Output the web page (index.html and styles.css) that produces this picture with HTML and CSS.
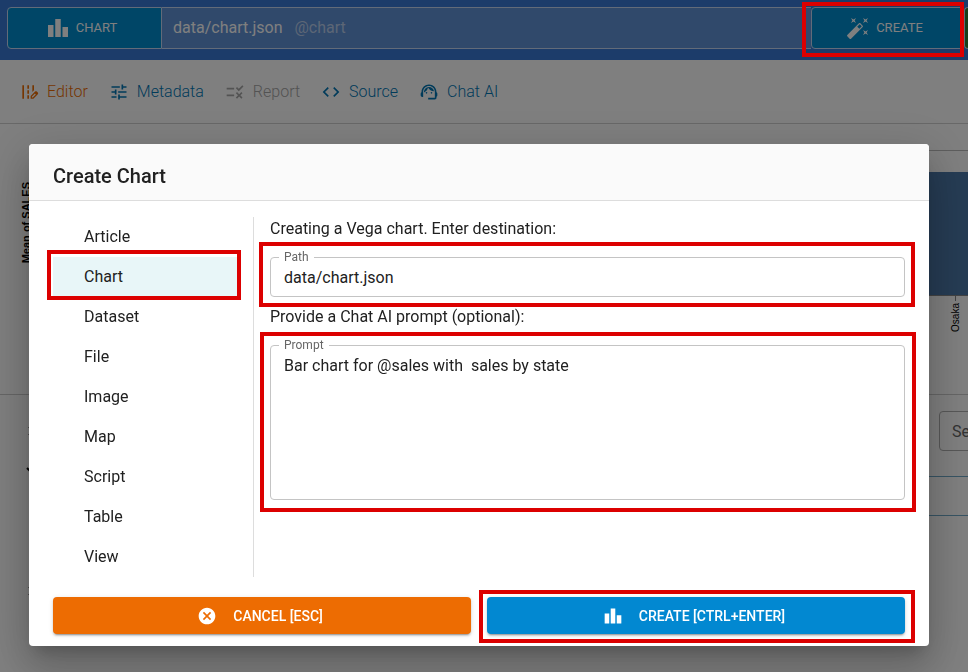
FILE: index.html
```html
<!DOCTYPE html>
<html lang="en">
<head>
<meta charset="utf-8">
<title>Create Chart</title>
<link rel="stylesheet" href="styles.css">
</head>
<body>
<div class="page">
  <header class="topbar">
    <button class="bar-btn bar-kind" type="button">
      <svg class="icon-lg" viewBox="0 0 24 24"><path d="M7.5 21H2V9h5.5v12zm7.25-18h-5.5v18h5.5V3zM22 11h-5.5v10H22V11z"/></svg>
      CHART
    </button>
    <div class="bar-path"><span>data/chart.json</span><span class="bar-ref">@chart</span></div>
    <button class="bar-btn bar-create" type="button">
      <svg class="icon-lg" viewBox="0 0 24 24"><path d="M7.5 5.6L5 7l1.4-2.5L5 2l2.5 1.4L10 2 8.6 4.5 10 7 7.5 5.6zm12 9.8L22 14l-1.4 2.5L22 19l-2.500-1.400L17 19l1.400-2.500L17 14l2.500 1.400zM22 2l-1.400 2.500L22 7l-2.500-1.400L17 7l1.400-2.500L17 2l2.500 1.400L22 2zm-8.660 10.780l2.440-2.440-2.120-2.120-2.440 2.440 2.120 2.120zm1.030-5.490l2.340 2.340c.39.37.39 1.020 0 1.410L5.040 22.710c-.39.39-1.040.39-1.410 0l-2.340-2.340c-.39-.37-.39-1.020 0-1.410L12.960 7.290c.39-.39 1.040-.39 1.410 0z"/></svg>
      CREATE
    </button>
    <div class="bar-run"></div>
  </header>
  <nav class="tabs">
    <a class="tab tab-active" href="#editor">
      <svg class="icon" viewBox="0 0 24 24"><path d="M18 4h-2v7.900l2-2zM4 4h2v16H4zM10 4h2v4h-2zM10 10h2v4h-2zM10 16h2v4h-2z"/><path fill-rule="evenodd" d="M22.560 12.590l-1.150-1.150c-.59-.59-1.540-.59-2.120 0L14 16.730V20h3.270l5.290-5.290c.59-.58.59-1.530 0-2.120zm-5.980 5.910h-1.080v-1.080l3.590-3.590 1.080 1.080z"/></svg>Editor</a>
    <a class="tab" href="#metadata">
      <svg class="icon" viewBox="0 0 24 24"><path d="M3 17v2h6v-2H3zM3 5v2h10V5H3zm10 16v-2h8v-2h-8v-2h-2v6h2zM7 9v2H3v2h4v2h2V9H7zm14 4v-2H11v2h10zm-6-4h2V7h4V5h-4V3h-2v6z"/></svg>Metadata</a>
    <a class="tab tab-disabled" href="#report">
      <svg class="icon" viewBox="0 0 24 24"><path d="M16.540 11L13 7.460l1.410-1.410 2.120 2.120 4.240-4.240 1.410 1.410L16.540 11zM11 7H2v2h9V7zm10 6.410L19.590 12 17 14.590 14.410 12 13 13.410 15.590 16 13 18.590 14.410 20 17 17.410 19.590 20 21 18.590 18.410 16 21 13.410zM11 15H2v2h9v-2z"/></svg>Report</a>
    <a class="tab" href="#source">
      <svg class="icon" viewBox="0 0 24 24"><path d="M9.400 16.600L4.800 12l4.600-4.600L8 6l-6 6 6 6 1.400-1.400zm5.200 0l4.600-4.600-4.600-4.600L16 6l6 6-6 6-1.400-1.400z"/></svg>Source</a>
    <a class="tab" href="#chat">
      <svg class="icon" viewBox="0 0 24 24"><path d="M21 12.220C21 6.730 16.740 3 12 3c-4.690 0-9 3.650-9 9.280-.6.34-1 .98-1 1.720v2c0 1.100.9 2 2 2h1v-6.100c0-3.870 3.130-7 7-7s7 3.130 7 7V19h-8v2h8c1.100 0 2-.9 2-2v-1.220c.59-.31 1-.92 1-1.640v-2.300c0-.7-.41-1.310-1-1.620z"/><circle cx="9" cy="13" r="1"/><circle cx="15" cy="13" r="1"/><path d="M18 11.030C17.520 8.180 15.040 6 12.050 6c-3.030 0-6.290 2.510-6.030 6.450 2.470-1.010 4.330-3.210 4.860-5.890 1.310 2.630 4 4.440 7.120 4.470z"/></svg>Chat AI</a>
  </nav>
  <section class="chart">
    <div class="axis-title">Mean of SALES</div>
    <div class="plot">
      <div class="bar"></div>
      <div class="tick"></div>
      <div class="tick-label">Osaka</div>
    </div>
  </section>
  <section class="lower">
    <div class="outline">
      <span class="handle"></span>
      <svg class="chevron" viewBox="0 0 10 8"><path d="M1 2l4 4 4-4"/></svg>
      <span class="handle"></span>
    </div>
    <div class="data">
      <input class="search" type="text" placeholder="Search" aria-label="Search">
      <div class="data-head"></div>
    </div>
  </section>
</div>

<div class="backdrop">
  <span class="mark mark-top"></span>
  <div class="dialog" role="dialog" aria-labelledby="dialog-title">
    <h2 class="dialog-title" id="dialog-title">Create Chart</h2>
    <div class="dialog-body">
      <ul class="kinds">
        <li><button class="kind" type="button">Article</button></li>
        <li class="marked"><button class="kind kind-selected" type="button">Chart</button><span class="mark mark-kind"></span></li>
        <li><button class="kind" type="button">Dataset</button></li>
        <li><button class="kind" type="button">File</button></li>
        <li><button class="kind" type="button">Image</button></li>
        <li><button class="kind" type="button">Map</button></li>
        <li><button class="kind" type="button">Script</button></li>
        <li><button class="kind" type="button">Table</button></li>
        <li><button class="kind" type="button">View</button></li>
      </ul>
      <div class="form">
        <p class="hint">Creating a Vega chart. Enter destination:</p>
        <div class="field marked">
          <label class="field-label" for="path">Path</label>
          <input class="field-input" id="path" type="text" value="data/chart.json">
          <span class="mark mark-path"></span>
        </div>
        <p class="hint">Provide a Chat AI prompt (optional):</p>
        <div class="field marked">
          <label class="field-label" for="prompt">Prompt</label>
          <textarea class="field-input field-area" id="prompt">Bar chart for @sales with  sales by state</textarea>
          <span class="mark mark-prompt"></span>
        </div>
      </div>
    </div>
    <div class="actions">
      <button class="action action-cancel" type="button">
        <svg class="icon" viewBox="0 0 24 24"><path d="M12 2C6.470 2 2 6.470 2 12s4.470 10 10 10 10-4.470 10-10S17.530 2 12 2zm5 13.590L15.590 17 12 13.410 8.410 17 7 15.590 10.590 12 7 8.410 8.410 7 12 10.590 15.590 7 17 8.410 13.410 12 17 15.590z"/></svg>
        CANCEL [ESC]
      </button>
      <div class="marked">
        <button class="action action-create" type="button">
          <svg class="icon" viewBox="0 0 24 24"><path d="M7.500 21H2V9h5.500v12zm7.250-18h-5.500v18h5.500V3zM22 11h-5.500v10H22V11z"/></svg>
          CREATE [CTRL+ENTER]
        </button>
        <span class="mark mark-action"></span>
      </div>
    </div>
  </div>
</div>
</body>
</html>
```

FILE: styles.css
```css
* { box-sizing: border-box; }

body {
  margin: 0;
  font-family: Roboto, "Liberation Sans", sans-serif;
  font-size: 16px;
  line-height: 24px;
  color: #212121;
  background: #fff;
  overflow: hidden;
}

button, input, textarea { font: inherit; color: inherit; }
button { cursor: pointer; }
svg { fill: currentColor; flex: none; }
.icon { width: 20px; height: 20px; }
.icon-lg { width: 24px; height: 24px; }

.page { min-height: 100vh; overflow: hidden; }

/* Top bar */
.topbar {
  display: flex;
  height: 60px;
  padding: 7px 0 11px 7px;
  background: #3878d4;
}
.bar-btn {
  display: flex;
  align-items: center;
  justify-content: center;
  gap: 6px;
  width: 155px;
  padding: 0 10px 0 4px;
  border: 1px solid #c4d7f2;
  background: #008ccf;
  color: #fff;
  font-size: 13px;
}
.bar-kind { border-radius: 4px 0 0 4px; }
.bar-create { border-radius: 4px; width: 153px; }
.bar-path {
  flex: 1;
  display: flex;
  align-items: center;
  gap: 12px;
  padding-left: 11px;
  border: solid #c4d7f2;
  border-width: 1px 0;
  background: #6092d6;
  color: #fff;
}
.bar-ref { color: #b9cdec; }
.bar-run {
  width: 4px;
  border: 1px solid #c4d7f2;
  border-right: 0;
  border-radius: 4px 0 0 4px;
  background: #2e7d32;
}

/* Tabs */
.tabs {
  display: flex;
  align-items: center;
  gap: 21px;
  height: 64px;
  padding-left: 19px;
  border-bottom: 1px solid #d0d0d0;
}
.tab {
  display: flex;
  align-items: center;
  gap: 8px;
  color: #0277b5;
  font-weight: 300;
  text-decoration: none;
}
.tab-active { color: #ed6c02; }
.tab-disabled { color: #a6a6a6; }

/* Chart behind the dialog */
.chart {
  display: flex;
  justify-content: space-between;
  height: 271px;
  border-bottom: 1px solid #ccc;
  font-family: "Liberation Sans", Arial, sans-serif;
}
.axis-title {
  writing-mode: vertical-rl;
  transform: rotate(180deg);
  align-self: flex-start;
  margin: 58px 0 0 20px;
  font-size: 11px;
  line-height: 13px;
  font-weight: 700;
  color: #000;
}
.plot {
  display: flex;
  flex-direction: column;
  align-items: flex-end;
  width: 120px;
  margin-top: 26px;
  border-top: 1px solid #bbb;
}
.bar {
  width: 100%;
  height: 124px;
  margin-top: 21px;
  background: #4c78a8;
  border-bottom: 1px solid #888;
}
.tick { width: 1px; height: 5px; margin-right: 12px; background: #888; }
.tick-label {
  writing-mode: vertical-rl;
  transform: rotate(180deg);
  margin: 2px 6px 0 0;
  font-size: 10px;
  line-height: 12px;
  color: #000;
}

.lower { display: flex; justify-content: space-between; }
.outline { display: flex; flex-direction: column; padding: 32px 0 0 26px; }
.handle {
  width: 12px;
  height: 8px;
  margin-left: 2px;
  border: solid #999;
  border-width: 1px 0;
}
.chevron {
  width: 10px;
  height: 8px;
  margin: 31px 0 113px;
  fill: none;
  stroke: #000;
  stroke-width: 2;
}
.data { width: 120px; padding-top: 16px; }
.search {
  display: block;
  width: 180px;
  height: 40px;
  margin-left: 91px;
  padding: 0 12px;
  border: 1px solid #b0b0b0;
  border-radius: 4px;
  background: transparent;
}
.search::placeholder { color: #666; opacity: 1; }
.data-head {
  height: 40px;
  margin-top: 25px;
  border: solid #6fa9c8;
  border-width: 1px 0;
}

/* Dialog */
.backdrop {
  position: fixed;
  inset: 0;
  display: flex;
  justify-content: center;
  align-items: flex-start;
  padding: 144px 39px 26px 29px;
  background: rgba(0, 0, 0, 0.5);
}
.dialog {
  flex: 1;
  max-width: 900px;
  border-radius: 4px;
  background: #fff;
  box-shadow: 0 11px 15px -7px rgba(0, 0, 0, 0.2),
    0 24px 38px 3px rgba(0, 0, 0, 0.14),
    0 9px 46px 8px rgba(0, 0, 0, 0.12);
}
.dialog-title {
  margin: 0;
  padding: 20px 24px 12px;
  border-bottom: 1px solid #ddd;
  border-radius: 4px 4px 0 0;
  background: #fafafa;
  font-size: 20px;
  line-height: 24px;
  font-weight: 500;
}
.dialog-body { display: flex; padding: 16px 24px 0; }
.kinds {
  width: 201px;
  margin: 0;
  padding: 0 16px 0 0;
  border-right: 1px solid #ddd;
  list-style: none;
}
.kind {
  display: block;
  width: 100%;
  height: 40px;
  padding: 0 31px;
  border: 0;
  background: transparent;
  text-align: left;
}
.kind-selected { background: #e8f6f8; }
.form { flex: 1; padding-left: 16px; }
.hint { margin: 0 0 16px; }
.field + .hint { margin-top: 8px; }
.field-label {
  position: absolute;
  top: -6px;
  left: 9px;
  padding: 0 5px;
  background: #fff;
  color: #666;
  font-size: 12px;
  line-height: 12px;
}
.field-input {
  display: block;
  width: 100%;
  height: 40px;
  padding: 0 13px;
  border: 1px solid #c4c4c4;
  border-radius: 4px;
  background: #fff;
  outline: 0;
}
.field-area { height: 155px; padding: 8px 13px; resize: none; }

.actions {
  display: grid;
  grid-template-columns: 1fr 1fr;
  gap: 16px;
  padding: 20px 24px 12px;
}
.action {
  display: flex;
  align-items: center;
  justify-content: center;
  gap: 16px;
  width: 100%;
  height: 37px;
  padding: 0 16px 0 12px;
  border: 0;
  border-radius: 4px;
  color: #fff;
  font-size: 14px;
  font-weight: 500;
  box-shadow: 0 3px 1px -2px rgba(0, 0, 0, 0.2),
    0 2px 2px rgba(0, 0, 0, 0.14),
    0 1px 5px rgba(0, 0, 0, 0.12);
}
.action-cancel { background: #ed6c02; }
.action-create { background: #0288d1; }

/* Red call-out frames */
.marked { position: relative; }
.mark {
  position: absolute;
  border: 4px solid #dc0000;
  pointer-events: none;
}
.mark-top { top: 2px; right: 4px; width: 162px; height: 55px; }
.mark-kind { inset: -7px -4px -3px -6px; }
.mark-path { inset: -15px -10px -10px -11px; }
.mark-prompt { inset: -13px -11px -12px -10px; }
.mark-action { inset: -7px -10px -9px -8px; }
```
